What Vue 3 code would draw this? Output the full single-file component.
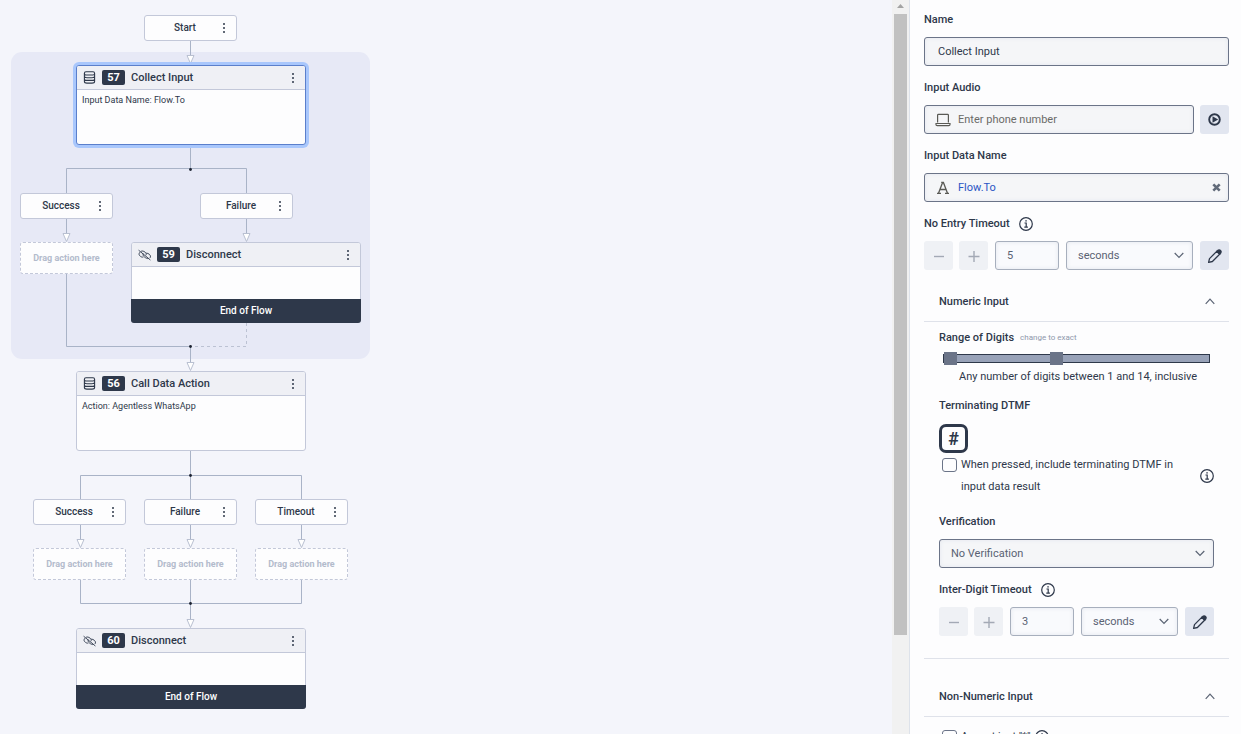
<script setup>
import { ref } from 'vue'

const ends = [
  { id: 'start', label: 'Start', x: 144, y: 15 },
  { id: 's57', label: 'Success', x: 20, y: 193 },
  { id: 'f57', label: 'Failure', x: 200, y: 193 },
  { id: 's56', label: 'Success', x: 33, y: 499 },
  { id: 'f56', label: 'Failure', x: 144, y: 499 },
  { id: 't56', label: 'Timeout', x: 255, y: 499 },
]
const slots = [
  { id: 'd1', x: 20, y: 242 },
  { id: 'd2', x: 33, y: 548 },
  { id: 'd3', x: 144, y: 548 },
  { id: 'd4', x: 255, y: 548 },
]
const actions = [
  { num: 57, title: 'Collect Input', detail: 'Input Data Name: Flow.To', x: 76, y: 65, selected: true },
  { num: 59, title: 'Disconnect', end: true, x: 131, y: 242 },
  { num: 56, title: 'Call Data Action', detail: 'Action: Agentless WhatsApp', x: 76, y: 371 },
  { num: 60, title: 'Disconnect', end: true, x: 76, y: 628 },
]
const arrows = [[190, 64], [66, 242], [246, 242], [190, 371], [80, 548], [190, 548], [301, 548], [190, 628]]
const joints = [[190, 169], [190, 346], [190, 475], [190, 603]]
const place = (n) => ({ left: n.x + 'px', top: n.y + 'px' })

const name = ref('Collect Input')
const audio = ref('')
const dataName = ref('Flow.To')
const noEntry = ref('5')
const interDigit = ref('3')
const minDigits = ref(1)
const maxDigits = ref(14)
const includeDtmf = ref(false)
const acceptStar = ref(false)
</script>

<template>
  <div class="page">
    <main class="canvas">
      <div class="group"></div>
      <svg class="wires" width="400" height="734" viewBox="0 0 400 734" aria-hidden="true">
        <g class="wire">
          <path d="M190.5 41V60M190.5 145V169M66.5 193V168.5H246.5V193M66.5 219V238M246.5 219V238M66.5 274V346.5H190.5V366" />
          <path d="M190.5 451V499M80.5 499V475.5H301.5V499M80.5 525V544M190.5 525V544M301.5 525V544" />
          <path d="M80.5 580V603.5H301.5V580M190.5 580V624" />
        </g>
        <path class="dash" d="M246.5 323V346.5H190.5" />
        <path v-for="(a, i) in arrows" :key="'a' + i" class="arrow" :d="`M${a[0] - 3} ${a[1] - 8.5}h7l-3.5 8z`" />
        <circle v-for="(j, i) in joints" :key="'j' + i" :cx="j[0] + 0.5" :cy="j[1] + 0.5" r="1.4" fill="#1b2130" />
      </svg>

      <div v-for="e in ends" :key="e.id" class="end" :style="place(e)">
        <span>{{ e.label }}</span>
        <button class="kebab" :aria-label="e.label + ' menu'"><i></i><i></i><i></i></button>
      </div>

      <div v-for="s in slots" :key="s.id" class="slot" :style="place(s)">Drag action here</div>

      <article v-for="a in actions" :key="a.num" class="card" :class="{ selected: a.selected }" :style="place(a)">
        <header>
          <svg v-if="!a.end" class="icon" width="12" height="13" viewBox="0 0 12 13" aria-hidden="true">
            <g fill="none" stroke="#2e384a" stroke-width="1.1">
              <rect x=".9" y=".8" width="10.200" height="3.200" rx="1.600" />
              <path d="M.9 2.600v7.800c0 1 1.200 1.700 2.600 1.700h5c1.400 0 2.600-.7 2.600-1.700V2.600M.9 5.400c.3.900 1.300 1.300 2.600 1.300h5c1.300 0 2.300-.4 2.600-1.300M.9 8.100c.3.900 1.300 1.300 2.600 1.300h5c1.300 0 2.300-.4 2.600-1.300" />
            </g>
          </svg>
          <svg v-else class="icon" width="13" height="12" viewBox="0 0 13 12" aria-hidden="true">
            <g fill="none" stroke="#3c4658" stroke-width="1">
              <path d="M.6 1.2 12.4 11" />
              <path d="M3.1 2.2c1.4-.5 2.7 0 3.9.9 1.3 1 1.6 2.2.8 3.2M2 3.2C.5 4.600.9 6.200 2.400 7.300c1 .8 2.100 1 3 .700M5.300 4.600c-.6 1.100-.1 2.400 1.200 3.400 1.400 1.100 2.600 1.800 4 1.500M8.200 4.100c1.200 0 2.300.5 3.100 1.200 1.300 1.100 1.500 2.400.7 3.600" />
            </g>
          </svg>
          <b class="num">{{ a.num }}</b>
          <h3>{{ a.title }}</h3>
          <button class="kebab" :aria-label="a.title + ' menu'"><i></i><i></i><i></i></button>
        </header>
        <p>{{ a.detail }}</p>
        <footer v-if="a.end">End of Flow</footer>
      </article>
    </main>

    <div class="scrollbar" aria-hidden="true">
      <svg width="7" height="4" viewBox="0 0 7 4"><path d="M0 4 3.500 0 7 4z" fill="#a3a3a3" /></svg>
      <div class="thumb"></div>
    </div>

    <aside class="panel">
      <div class="field">
        <label for="name">Name</label>
        <div class="box"><input id="name" v-model="name" type="text" /></div>
      </div>

      <div class="field">
        <label for="audio">Input Audio</label>
        <div class="row">
          <div class="box with-icon">
            <svg width="16" height="14" viewBox="0 0 16 14" fill="none" stroke="#5a5a55" stroke-width="1.200" aria-hidden="true">
              <path d="M2.600 9.500V2.200q0-.8.8-.8h9.200q.8 0 .8.8v7.300M1 10.500h14v1q0 1.200-1.200 1.200H2.200Q1 12.700 1 11.500z" />
            </svg>
            <input id="audio" v-model="audio" type="text" placeholder="Enter phone number" />
          </div>
          <button class="square strong" aria-label="Play">
            <svg width="13" height="13" viewBox="0 0 13 13"><circle cx="6.500" cy="6.500" r="5.300" fill="none" stroke="#2e384a" stroke-width="1.900" /><path d="M4.500 3.200v6.600L10.200 6.500z" fill="#2e384a" /></svg>
          </button>
        </div>
      </div>

      <div class="field">
        <label for="dataname">Input Data Name</label>
        <div class="box with-icon">
          <svg width="16" height="14" viewBox="0 0 16 14" fill="none" stroke="#5a5a55" stroke-width="1.300" aria-hidden="true">
            <path d="M3.500 12.300 7.600 1.500h.8l4.100 10.800M5 8.500h6M2 12.400h4M10 12.400h4M6.200 1.400h2.200" />
          </svg>
          <input id="dataname" v-model="dataName" class="link" type="text" />
          <button class="clear" aria-label="Clear">
            <svg width="9" height="9" viewBox="0 0 9 9"><path d="M1.300 1.300 7.700 7.700M7.700 1.300 1.300 7.700" stroke="#626b7a" stroke-width="2.600" /></svg>
          </button>
        </div>
      </div>

      <div class="field">
        <div class="label-row">
          <label for="noentry">No Entry Timeout</label>
          <svg class="info" width="14" height="14" viewBox="0 0 14 14"><circle cx="7" cy="7" r="6.300" /><path d="M5.500 6H7.200V10M5.300 10.200H8.900M6.300 3.800H7.800" /></svg>
        </div>
        <div class="stepper">
          <button class="square" aria-label="Decrease"><svg width="12" height="12" viewBox="0 0 12 12"><path d="M1 6.500H11" /></svg></button>
          <button class="square" aria-label="Increase"><svg width="12" height="12" viewBox="0 0 12 12"><path d="M.5 6.500H11.500M6 1V12" /></svg></button>
          <div class="box light count"><input id="noentry" v-model="noEntry" type="text" /></div>
          <div class="box light grow">
            <select aria-label="No entry timeout unit"><option>seconds</option></select>
            <svg class="chev" width="10" height="7" viewBox="0 0 10 7"><path d="M.7 1 5 5.500 9.300 1" /></svg>
          </div>
          <button class="square strong" aria-label="Edit">
            <svg width="16" height="16" viewBox="0 0 16 16"><path d="M1.600 14.400 2.500 10.600 9.700 3.400 12.600 6.300 5.400 13.500Z" fill="none" stroke="#2e384a" stroke-width="1.300" stroke-linejoin="round" /><path d="M9 3 11 1.500Q12.500.6 14 2 15.400 3.500 14.500 5L13 7Z" fill="#2e384a" /></svg>
          </button>
        </div>
      </div>

      <section>
        <h2><span>Numeric Input</span>
          <svg class="chev" width="10" height="7" viewBox="0 0 10 7"><path d="M.7 5.800 5 1.200 9.300 5.800" /></svg>
        </h2>
        <div class="body">
          <div class="label-row range-label">
            <span class="label">Range of Digits</span>
            <a href="#">change to exact</a>
          </div>
          <div class="slider">
            <input v-model="minDigits" type="range" min="1" max="32" aria-label="Minimum digits" />
            <input v-model="maxDigits" type="range" min="1" max="32" aria-label="Maximum digits" />
          </div>
          <p class="hint">Any number of digits between {{ minDigits }} and {{ maxDigits }}, inclusive</p>

          <span class="label">Terminating DTMF</span>
          <button class="hash">#</button>
          <div class="check-row">
            <input id="dtmf" v-model="includeDtmf" type="checkbox" />
            <label for="dtmf">When pressed, include terminating DTMF in input data result</label>
            <svg class="info" width="14" height="14" viewBox="0 0 14 14"><circle cx="7" cy="7" r="6.300" /><path d="M5.500 6H7.200V10M5.300 10.200H8.900M6.300 3.800H7.800" /></svg>
          </div>

          <div class="field">
            <label for="verify">Verification</label>
            <div class="box">
              <select id="verify"><option>No Verification</option></select>
              <svg class="chev" width="10" height="7" viewBox="0 0 10 7"><path d="M.7 1 5 5.500 9.300 1" /></svg>
            </div>
          </div>

          <div class="field">
            <div class="label-row">
              <label for="interdigit">Inter-Digit Timeout</label>
              <svg class="info" width="14" height="14" viewBox="0 0 14 14"><circle cx="7" cy="7" r="6.300" /><path d="M5.500 6H7.200V10M5.300 10.200H8.900M6.300 3.800H7.800" /></svg>
            </div>
            <div class="stepper">
              <button class="square" aria-label="Decrease"><svg width="12" height="12" viewBox="0 0 12 12"><path d="M1 6.500H11" /></svg></button>
              <button class="square" aria-label="Increase"><svg width="12" height="12" viewBox="0 0 12 12"><path d="M.5 6.500H11.500M6 1V12" /></svg></button>
              <div class="box light count"><input id="interdigit" v-model="interDigit" type="text" /></div>
              <div class="box light grow">
                <select aria-label="Inter-digit timeout unit"><option>seconds</option></select>
                <svg class="chev" width="10" height="7" viewBox="0 0 10 7"><path d="M.7 1 5 5.500 9.300 1" /></svg>
              </div>
              <button class="square strong" aria-label="Edit">
                <svg width="16" height="16" viewBox="0 0 16 16"><path d="M1.600 14.400 2.500 10.600 9.700 3.400 12.600 6.300 5.400 13.500Z" fill="none" stroke="#2e384a" stroke-width="1.300" stroke-linejoin="round" /><path d="M9 3 11 1.500Q12.500.6 14 2 15.400 3.500 14.500 5L13 7Z" fill="#2e384a" /></svg>
              </button>
            </div>
          </div>
        </div>
      </section>

      <section class="divided">
        <h2><span>Non-Numeric Input</span>
          <svg class="chev" width="10" height="7" viewBox="0 0 10 7"><path d="M.7 5.800 5 1.200 9.300 5.800" /></svg>
        </h2>
        <div class="body">
          <div class="check-row last">
            <input id="star" v-model="acceptStar" type="checkbox" />
            <label for="star">Accept just "*"</label>
            <svg class="info" width="14" height="14" viewBox="0 0 14 14"><circle cx="7" cy="7" r="6.300" /><path d="M5.500 6H7.200V10M5.300 10.200H8.900M6.300 3.800H7.800" /></svg>
          </div>
        </div>
      </section>
    </aside>
  </div>
</template>

<style>
body {
  margin: 0;
  overflow: hidden;
}
</style>

<style scoped>
* {
  box-sizing: border-box;
}
.page {
  display: flex;
  height: 100vh;
  font-family: Roboto, "Liberation Sans", sans-serif;
  font-size: 11px;
  color: #2e384a;
  background: #f4f5fb;
}
button,
input,
select {
  font: inherit;
  color: inherit;
  margin: 0;
}
button {
  padding: 0;
  border: 0;
  background: none;
  cursor: pointer;
}
h2,
h3,
p {
  margin: 0;
}

/* flow canvas */
.canvas {
  position: relative;
  flex: 1;
  overflow: hidden;
}
.group {
  position: absolute;
  left: 11px;
  top: 52px;
  width: 359px;
  height: 307px;
  border-radius: 11px;
  background: #e7e9f6;
}
.wires {
  position: absolute;
  left: 0;
  top: 0;
}
.wire path {
  fill: none;
  stroke: #a9b3c7;
}
.dash {
  fill: none;
  stroke: #bcc2d3;
  stroke-dasharray: 3 3;
}
.arrow {
  fill: #fff;
  stroke: #b9c0d1;
}
.end,
.slot,
.card {
  position: absolute;
  border: 1px solid #c3c8d9;
  border-radius: 3px;
  background: #fdfdfe;
}
.end {
  display: grid;
  grid-template-columns: 80px 1fr;
  align-items: center;
  width: 93px;
  height: 26px;
  font-size: 10px;
  font-weight: 500;
}
.end span {
  grid-area: 1 / 1;
  line-height: 24px;
  text-align: center;
}
.end .kebab {
  grid-area: 1 / 1 / 2 / 3;
  justify-self: end;
  margin-right: 8px;
}
.kebab {
  display: flex;
  flex-direction: column;
  align-items: center;
  gap: 2px;
  width: 8px;
}
.kebab i {
  width: 2px;
  height: 2px;
  border-radius: 1px;
  background: #2e384a;
}
.slot {
  width: 93px;
  height: 32px;
  border-style: dashed;
  line-height: 31px;
  text-align: center;
  font-size: 9px;
  font-weight: 700;
  color: #b3bbcc;
}
.card {
  display: flex;
  flex-direction: column;
  width: 230px;
  min-height: 80px;
}
.card.selected {
  border-color: #5b7fcb;
  box-shadow: 0 0 0 3px #a9c7fc;
}
.card header {
  display: flex;
  align-items: center;
  height: 24px;
  padding: 0 8px 0 6px;
  border-bottom: 1px solid #c3c8d9;
  border-radius: 2px 2px 0 0;
  background: #eff0f5;
}
.icon {
  width: 13px;
}
.num {
  width: 23px;
  margin: 0 6px;
  border-radius: 2px;
  background: #2e384a;
  color: #fff;
  font-size: 11px;
  line-height: 15px;
  text-align: center;
}
.card h3 {
  flex: 1;
  font-size: 11px;
  font-weight: 500;
}
.card .kebab {
  margin-left: 1px;
}
.card p {
  min-height: 32px;
  padding: 4px 5px;
  font-size: 9px;
  line-height: 12px;
}
.card footer {
  margin: 0 -1px -1px;
  border-radius: 0 0 3px 3px;
  background: #2e384a;
  color: #fff;
  font-size: 10px;
  font-weight: 500;
  line-height: 24px;
  text-align: center;
}

/* scrollbar */
.scrollbar {
  display: flex;
  flex-direction: column;
  align-items: center;
  gap: 6px;
  width: 17px;
  padding-top: 4px;
  background: #f1f1f1;
}
.thumb {
  width: 13px;
  height: 85%;
  background: #c1c1c1;
}

/* properties panel */
.panel {
  width: 332px;
  padding: 9px 12px 0 14px;
  border-left: 1px solid #dde2ea;
  background: #fdfdfe;
  overflow: hidden;
}
.field {
  display: grid;
  gap: 6px;
  margin-bottom: 11px;
}
.field label,
.label,
.label-row {
  line-height: 22px;
}
.field label,
.label {
  display: block;
  font-weight: 500;
}
.label-row {
  display: flex;
  align-items: center;
  gap: 9px;
  height: 22px;
}
.row,
.stepper {
  display: flex;
  gap: 6px;
}
.box {
  display: flex;
  align-items: center;
  flex: 1;
  min-width: 0;
  height: 29px;
  border: 1px solid #6b7488;
  border-radius: 3px;
  background: #f5f6f8;
  box-shadow: inset 0 0 4px #e4e7ed;
}
.box input,
.box select {
  flex: 1;
  width: 100%;
  min-width: 0;
  height: 27px;
  padding: 0 0 1px 13px;
  border: 0;
  outline: 0;
  background: none;
  appearance: none;
}
.box select {
  padding-left: 11px;
  color: #596273;
}
.with-icon {
  padding-left: 10px;
}
.box.with-icon input {
  padding-left: 7px;
}
.box input::placeholder {
  color: #6b6b68;
  opacity: 1;
}
.box .link {
  color: #2a55c4;
}
.clear {
  display: flex;
  margin-right: 7px;
}
.light {
  border-color: #a7afbd;
  background: #f9fafd;
}
.light input,
.light select {
  color: #596273;
}
.box.light input {
  padding-left: 11px;
}
.count {
  flex: 0 0 64px;
}
.stepper .box,
.stepper .strong {
  margin-left: 1px;
}
.chev {
  flex: none;
  margin-right: 8px;
  fill: none;
  stroke: #5b6474;
  stroke-width: 1.2;
}
.box .chev {
  pointer-events: none;
}
.square {
  display: grid;
  place-items: center;
  flex: 0 0 29px;
  height: 29px;
  border-radius: 3px;
  background: #eff1f5;
}
.square:not(.strong) path {
  stroke: #a3a9b5;
  stroke-width: 1.4;
}
.square.strong {
  background: #e2e6f0;
}
.info {
  flex: none;
  fill: none;
  stroke: #2e384a;
  stroke-width: 1.2;
}
h2 {
  display: flex;
  align-items: center;
  justify-content: space-between;
  height: 41px;
  padding: 0 6px 0 15px;
  border-bottom: 1px solid #dfe2ea;
  font-size: 11px;
  font-weight: 500;
}
.body {
  padding: 5px 15px 0;
}
.range-label {
  gap: 6px;
}
.range-label a {
  color: #8f98ac;
  font-size: 8px;
  text-decoration: none;
}
.slider {
  position: relative;
  height: 9px;
  margin: 5px 4px 0;
  border: 1px solid #2e384a;
  background: #98a2b8;
}
.slider input {
  position: absolute;
  left: 0;
  top: -3px;
  width: 100%;
  height: 13px;
  appearance: none;
  background: none;
  pointer-events: none;
}
.slider input::-webkit-slider-thumb {
  width: 13px;
  height: 13px;
  appearance: none;
  border-radius: 0;
  background: #6b7488;
  pointer-events: auto;
}
.hint {
  margin-bottom: 7px;
  padding: 3px 0 0 20px;
  line-height: 22px;
}
.hash {
  display: block;
  width: 29px;
  height: 29px;
  margin-top: 7px;
  border: 3px solid #2e384a;
  border-radius: 7px;
  font-size: 18px;
  font-weight: 700;
  line-height: 22px;
}
.check-row {
  display: flex;
  align-items: center;
  gap: 4px;
  margin: 1px 0 13px 3px;
  line-height: 22px;
}
.check-row input {
  flex: none;
  align-self: flex-start;
  width: 15px;
  height: 14px;
  margin-top: 4px;
  appearance: none;
  border: 1px solid #6b7488;
  border-radius: 3px;
  background: #fdfdfe;
}
.check-row input:checked {
  background: #2a55c4;
}
.check-row label {
  flex: 1;
  padding-right: 20px;
}
.divided {
  margin-top: 22px;
  border-top: 1px solid #dfe2ea;
  padding-top: 17px;
}
.check-row.last {
  margin-top: 4px;
}
.last label {
  flex: none;
  padding-right: 0;
}
</style>
